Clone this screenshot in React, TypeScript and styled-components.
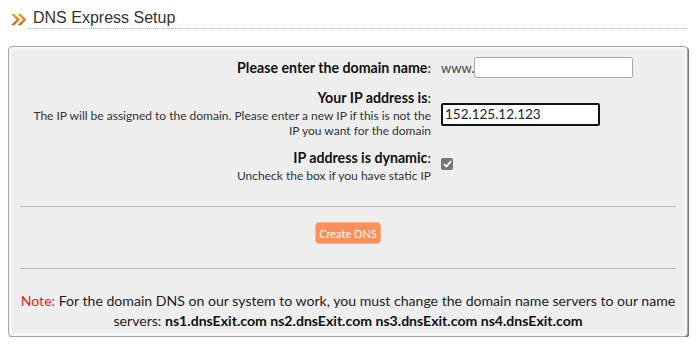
import React from "react";
import styled, { createGlobalStyle } from "styled-components";

const Global = createGlobalStyle`
  html, body { margin: 0; padding: 0; background: #fff; }
  body { font-family: Lato, "Open Sans", sans-serif; color: #222; }
  * { box-sizing: border-box; }
`;

const Page = styled.div`
  width: 700px;
  padding: 7px 12px 0 8px;
`;

const Header = styled.div`
  display: flex;
  align-items: flex-end;
  height: 22px;
  margin-bottom: 17px;
`;

const Chevron = styled.svg`
  width: 18px;
  height: 13px;
  margin: 0 0 3px 2px;
  flex: none;
`;

const Title = styled.h2`
  flex: 1;
  margin: 0;
  padding: 0 0 0 5px;
  font-family: "Liberation Sans", Arial, sans-serif;
  font-weight: normal;
  font-size: 16px;
  line-height: 20px;
  color: #333;
  border-bottom: 1px dotted #bdbdbd;
`;

const Panel = styled.div`
  border: 1px solid #a5a5a5;
  border-radius: 4px;
  box-shadow: 1px 1px 0 #777;
  padding: 3px;
  background: #f5f5f5;
  height: 291px;
`;

const Inner = styled.div`
  background: #eee;
  height: 100%;
  padding-top: 7px;
`;

const Form = styled.div`
  display: grid;
  grid-template-columns: 419px 1fr;
  column-gap: 10px;
  row-gap: 12px;
  align-items: center;
`;

const Label = styled.div`
  text-align: right;
`;

const LabelTitle = styled.div`
  font-weight: bold;
  font-size: 14.2px;
  line-height: 16px;
  color: #111;
`;

const Colon = styled.span`
  font-weight: normal;
`;

const LabelSub = styled.div`
  margin-top: 2px;
  font-size: 12px;
  line-height: 15px;
  color: #333;
`;

const Field = styled.div`
  display: flex;
  align-items: center;
  font-size: 13px;
  color: #444;
`;

const TextInput = styled.input<{ $focused?: boolean }>`
  width: 159px;
  height: ${(p) => (p.$focused ? "23px" : "21px")};
  border: ${(p) => (p.$focused ? "2px solid #111" : "1px solid #a9a9a9")};
  border-radius: 2px;
  background: #fff;
  font-family: Lato, "Open Sans", sans-serif;
  font-size: 13.5px;
  color: #222;
  padding: 0 0 0 2px;
  outline: none;
`;

const Check = styled.span`
  display: inline-flex;
  align-items: center;
  justify-content: center;
  width: 12px;
  height: 12px;
  border-radius: 2px;
  background: #767676;
  margin-top: -5px;
`;

const Rule = styled.hr<{ $top?: number }>`
  border: 0;
  border-top: 1px solid #bdbdbd;
  margin: ${(p) => p.$top ?? 0}px 8px 0;
`;

const ButtonRow = styled.div`
  display: flex;
  justify-content: center;
  align-items: flex-start;
  padding: 15px 0 24px;
`;

const Button = styled.button`
  height: 22px;
  padding: 0 3px;
  border: 1px solid #fbb48e;
  border-radius: 4px;
  background: #fb8f5a;
  color: #fff;
  font-family: Lato, "Open Sans", sans-serif;
  font-size: 11px;
  cursor: pointer;
`;

const Note = styled.p`
  margin: 0;
  padding: 22px 8px 0;
  text-align: center;
  font-size: 14.1px;
  line-height: 20px;
  color: #222;
`;

const NoteTag = styled.span`
  color: #e0232b;
`;

const Strong = styled.b`
  font-weight: bold;
  line-height: 20px;
  color: #111;
`;

export default function App() {
  return (
    <>
      <Global />
      <Page>
        <Header>
          <Chevron viewBox="0 0 18 13">
            <defs>
              <linearGradient id="cg" x1="0" y1="0" x2="0" y2="1">
                <stop offset="0" stopColor="#f0a040" />
                <stop offset="1" stopColor="#c8641a" />
              </linearGradient>
            </defs>
            <path d="M1 1 L4.5 1 L10 6.5 L4.5 12 L1 12 L6.5 6.5 Z" fill="url(#cg)" />
            <path d="M7.5 1 L11 1 L16.5 6.5 L11 12 L7.5 12 L13 6.5 Z" fill="url(#cg)" />
          </Chevron>
          <Title>DNS Express Setup</Title>
        </Header>
        <Panel>
          <Inner>
            <Form>
              <Label>
                <LabelTitle>
                  Please enter the domain name<Colon>:</Colon>
                </LabelTitle>
              </Label>
              <Field>
                www.
                <TextInput type="text" defaultValue="" />
              </Field>

              <Label>
                <LabelTitle>
                  Your IP address is<Colon>:</Colon>
                </LabelTitle>
                <LabelSub>
                  The IP will be assigned to the domain. Please enter a new IP if this is not the
                  <br />
                  IP you want for the domain
                </LabelSub>
              </Label>
              <Field>
                <TextInput $focused type="text" defaultValue="152.125.12.123" />
              </Field>

              <Label>
                <LabelTitle>
                  IP address is dynamic<Colon>:</Colon>
                </LabelTitle>
                <LabelSub>Uncheck the box if you have static IP</LabelSub>
              </Label>
              <Field>
                <Check>
                  <svg width="9" height="8" viewBox="0 0 9 8">
                    <path d="M1 4.2 L3.4 6.5 L8 1.2" stroke="#fff" strokeWidth="1.8" fill="none" />
                  </svg>
                </Check>
              </Field>
            </Form>
            <Rule $top={23} />
            <ButtonRow>
              <Button>Create DNS</Button>
            </ButtonRow>
            <Rule />
            <Note>
              <NoteTag>Note:</NoteTag> For the domain DNS on our system to work, you must change the
              domain name servers to our name servers:{" "}
              <Strong>ns1.dnsExit.com ns2.dnsExit.com ns3.dnsExit.com ns4.dnsExit.com</Strong>
            </Note>
          </Inner>
        </Panel>
      </Page>
    </>
  );
}
